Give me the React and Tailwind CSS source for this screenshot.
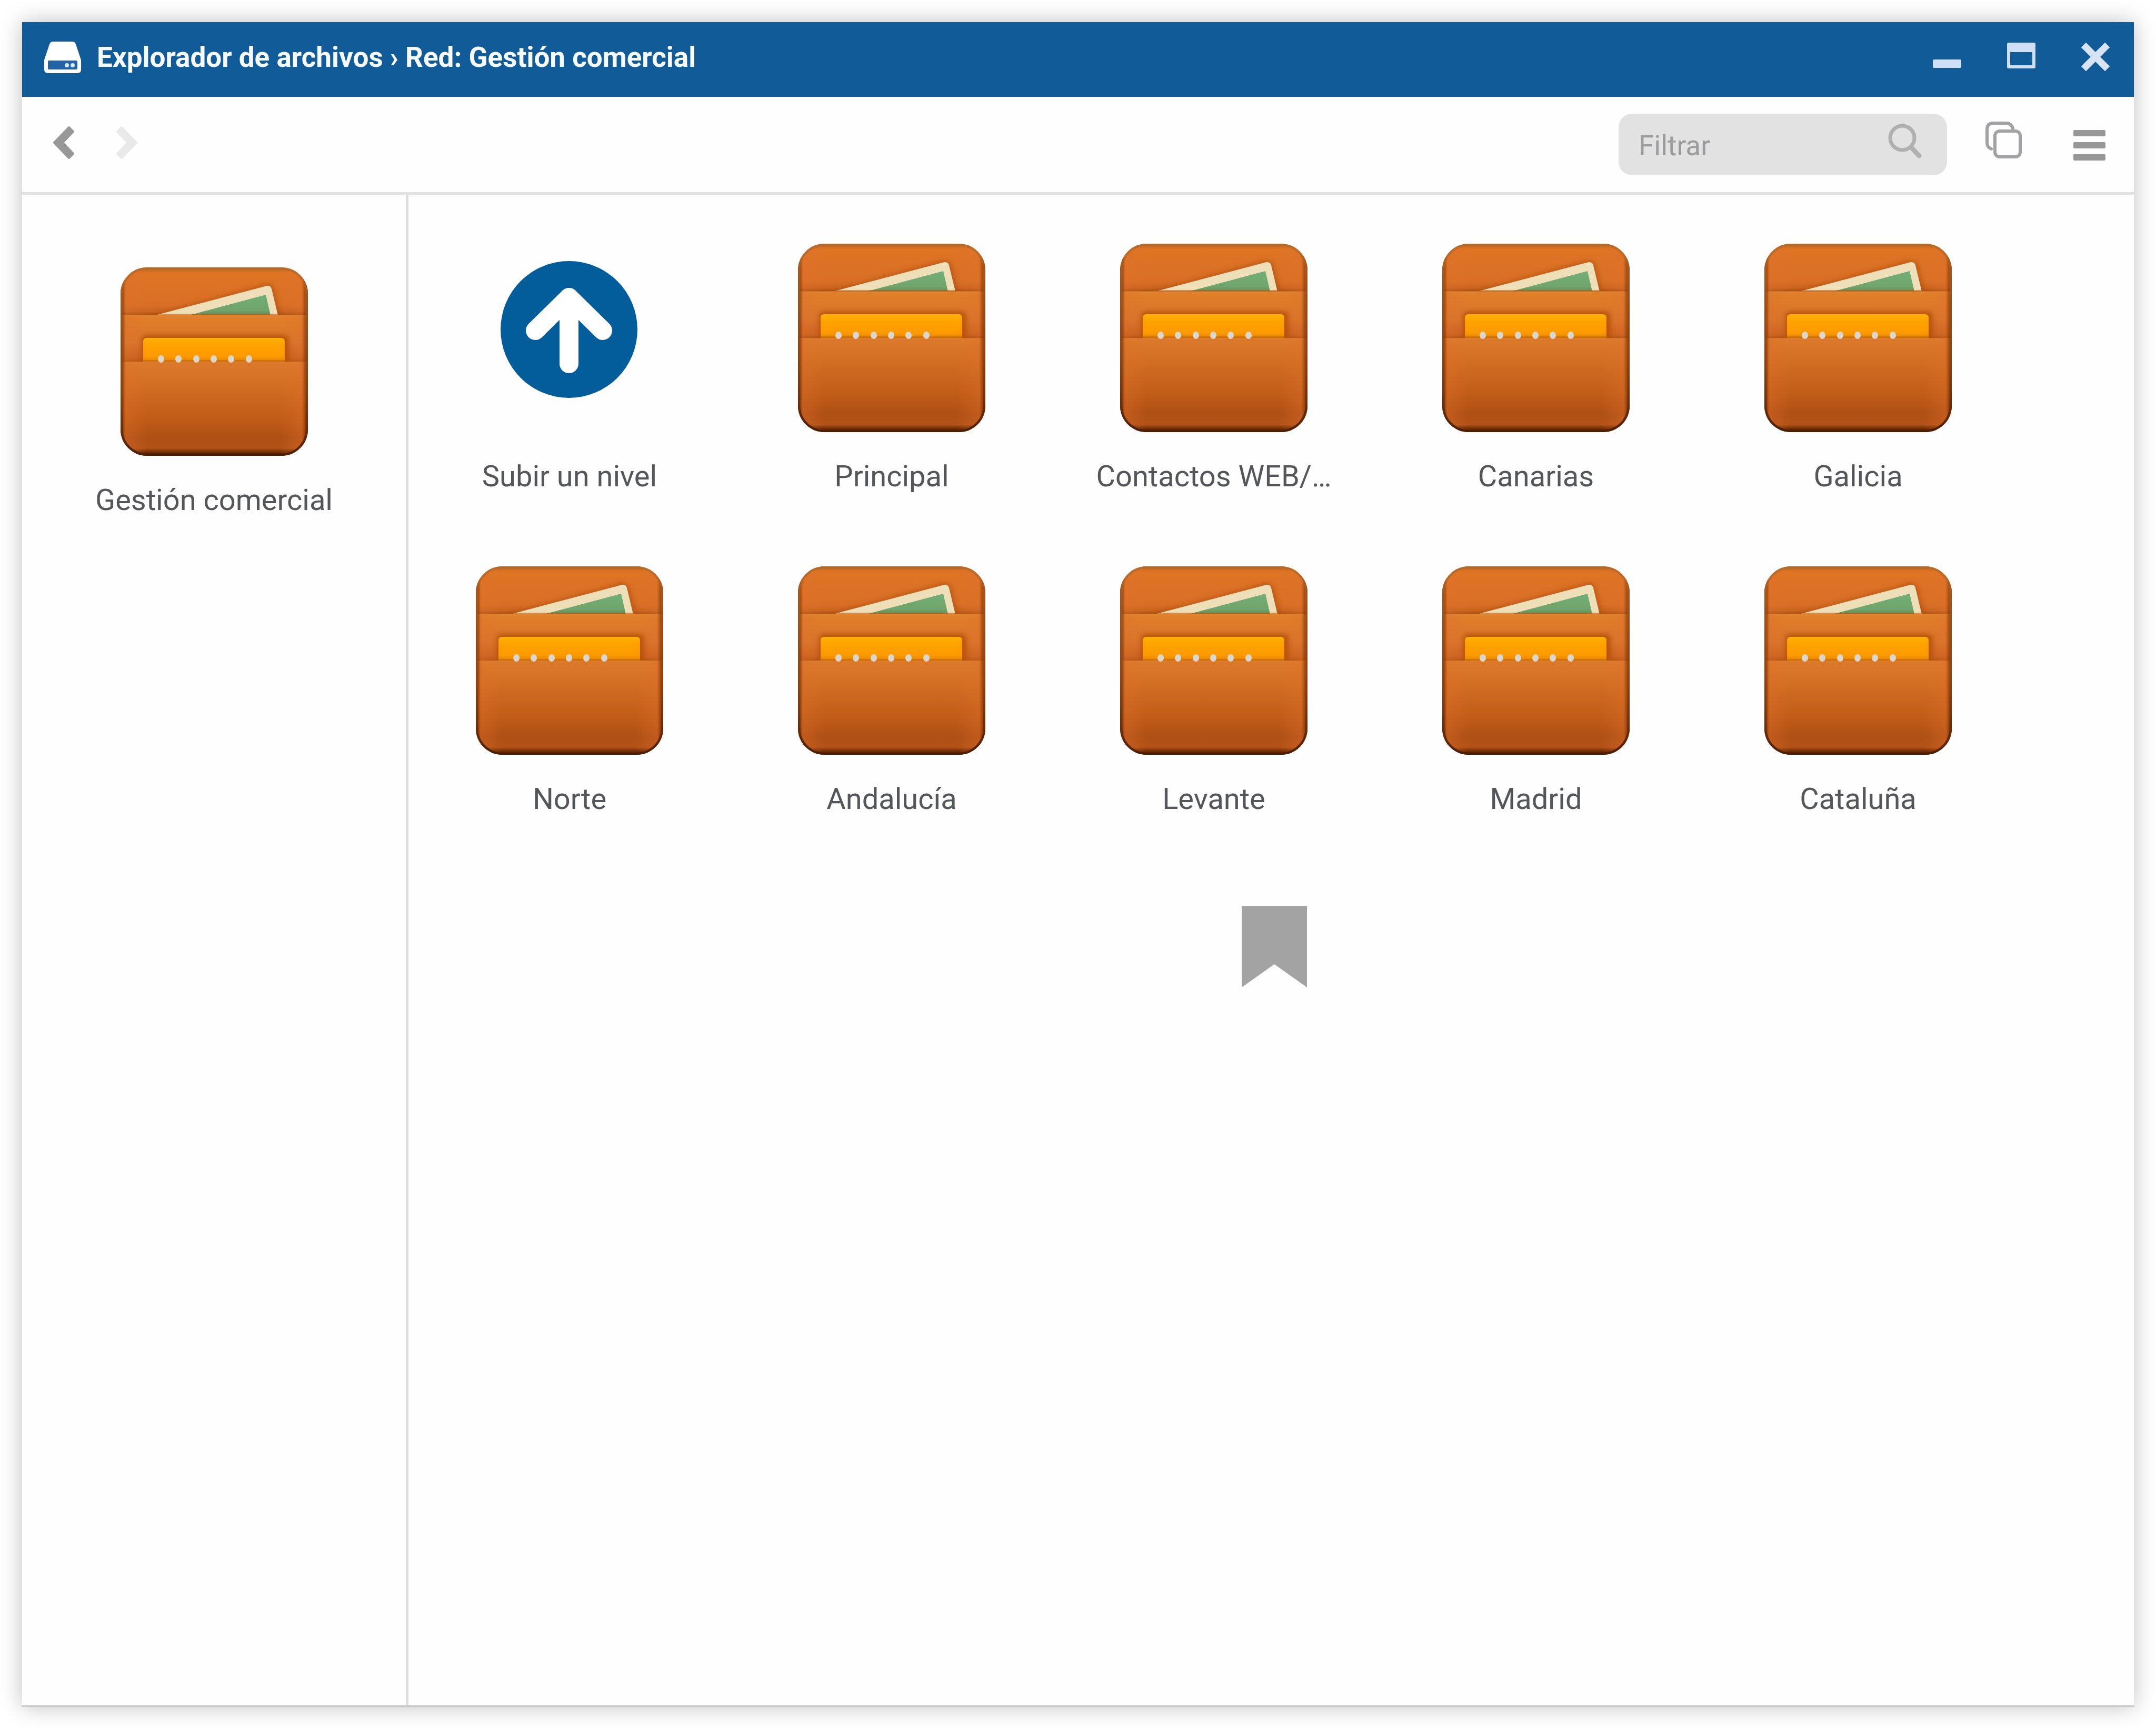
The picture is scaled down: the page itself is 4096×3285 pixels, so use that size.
import React, { useState } from 'react';

const folders = [
  'Principal',
  'Contactos WEB/…',
  'Canarias',
  'Galicia',
  'Norte',
  'Andalucía',
  'Levante',
  'Madrid',
  'Cataluña',
];

const WalletDefs = () => (
  <svg className="absolute h-0 w-0" aria-hidden="true">
    <defs>
      <clipPath id="walletShape">
        <rect width="356" height="358" rx="50" />
      </clipPath>
      <linearGradient id="back" x1="0" y1="0" x2="0" y2="1">
        <stop offset="0" stopColor="#b9651f" />
        <stop offset="0.12" stopColor="#df7424" />
        <stop offset="0.8" stopColor="#d96f26" />
        <stop offset="0.94" stopColor="#c9641f" />
        <stop offset="1" stopColor="#a94f14" />
      </linearGradient>
      <linearGradient id="middle" x1="0" y1="0" x2="0" y2="1">
        <stop offset="0" stopColor="#e08432" />
        <stop offset="0.1" stopColor="#df7d29" />
        <stop offset="0.6" stopColor="#d8742b" />
        <stop offset="0.92" stopColor="#c8601f" />
        <stop offset="1" stopColor="#a94d10" />
      </linearGradient>
      <linearGradient id="front" x1="0" y1="0" x2="0" y2="1">
        <stop offset="0" stopColor="#dc7a2c" />
        <stop offset="0.25" stopColor="#d26e22" />
        <stop offset="0.6" stopColor="#c15c19" />
        <stop offset="0.8" stopColor="#b05015" />
        <stop offset="0.92" stopColor="#b35217" />
        <stop offset="0.945" stopColor="#8a3c0b" />
        <stop offset="0.97" stopColor="#662805" />
        <stop offset="1" stopColor="#6b341a" />
      </linearGradient>
      <linearGradient id="card" x1="0" y1="0" x2="0" y2="1">
        <stop offset="0" stopColor="#ffb208" />
        <stop offset="0.3" stopColor="#ffa200" />
        <stop offset="0.75" stopColor="#fd9b00" />
        <stop offset="1" stopColor="#e08100" />
      </linearGradient>
      <linearGradient id="note" x1="0" y1="0" x2="0" y2="1">
        <stop offset="0" stopColor="#72ae78" />
        <stop offset="0.75" stopColor="#70a56c" />
        <stop offset="1" stopColor="#668c58" />
      </linearGradient>
      <linearGradient id="side" x1="0" y1="0" x2="1" y2="0">
        <stop offset="0" stopColor="#8f3d08" stopOpacity="0.9" />
        <stop offset="0.016" stopColor="#8f3d08" stopOpacity="0.6" />
        <stop offset="0.028" stopColor="#e0702c" stopOpacity="0.35" />
        <stop offset="0.14" stopColor="#e0702c" stopOpacity="0" />
        <stop offset="0.85" stopColor="#e0702c" stopOpacity="0" />
        <stop offset="0.965" stopColor="#e0702c" stopOpacity="0.35" />
        <stop offset="0.982" stopColor="#8f3d08" stopOpacity="0.6" />
        <stop offset="1" stopColor="#6f3415" stopOpacity="0.9" />
      </linearGradient>
      <linearGradient id="edge" x1="0" y1="0" x2="0" y2="1">
        <stop offset="0" stopColor="#b06a2c" stopOpacity="0.7" />
        <stop offset="0.6" stopColor="#8a4212" stopOpacity="0.6" />
        <stop offset="1" stopColor="#4e1e04" />
      </linearGradient>
      <filter id="soft" x="-20%" y="-20%" width="140%" height="140%">
        <feGaussianBlur stdDeviation="5" />
      </filter>
    </defs>
  </svg>
);

const WalletIcon = () => (
  <svg viewBox="0 0 356 358" className="h-[358px] w-[356px]" aria-hidden="true">
    <g clipPath="url(#walletShape)">
      <rect width="356" height="90" fill="url(#back)" />
      <path d="M60 91 276 32 290 36 304 91Z" fill="#a8480c" opacity="0.6" filter="url(#soft)" />
      <path d="M66 91 278 35Q285 34 287 41L299 91Z" fill="#eedfb8" />
      <path d="M130 91 276 52 285 91Z" fill="url(#note)" />
      <rect y="90" width="356" height="90" fill="url(#middle)" />
      <rect y="88" width="356" height="3" fill="#b2560f" opacity="0.55" />
      <rect x="40" y="129" width="280" height="60" rx="8" fill="#b04c04" opacity="0.85" filter="url(#soft)" />
      <path d="M43 180V141Q43 134 50 134H305Q312 134 312 141V180Z" fill="url(#card)" />
      <rect y="179" width="356" height="179" fill="url(#front)" />
      <rect y="176" width="356" height="3" fill="#b2560f" opacity="0.4" />
      {[77, 110, 144, 177, 210, 244].map(x => (
        <ellipse key={x} cx={x} cy="174" rx="6" ry="7" fill="#dcd6cb" />
      ))}
      <rect width="356" height="358" fill="url(#side)" />
      <rect x="2" y="2" width="352" height="354" rx="48" fill="none" stroke="url(#edge)" strokeWidth="5" />
    </g>
  </svg>
);

const UpIcon = () => (
  <svg viewBox="0 0 356 358" className="h-[358px] w-[356px]" aria-hidden="true">
    <circle cx="177" cy="163" r="130" fill="#045d9b" />
    <path d="M177 102V228M113 165 177 102 241 165" fill="none" stroke="#fff" strokeWidth="36" strokeLinecap="round" strokeLinejoin="round" />
  </svg>
);

const Tile = ({ icon, label }) => (
  <button type="button" className="flex w-[612px] flex-col items-center gap-[50px]">
    {icon}
    <span className="max-w-full truncate text-[56px] leading-[68px] text-[#55565a]">{label}</span>
  </button>
);

const App = () => {
  const [filter, setFilter] = useState('');

  const visible = folders.filter(f => f.toLowerCase().includes(filter.toLowerCase()));

  return (
    <div className="flex min-h-screen bg-white p-[42px] font-['Roboto',sans-serif]">
      <WalletDefs />
      <div className="flex flex-1 flex-col border-b-[3px] border-[#cccccc] bg-[#fefefe] shadow-[0_0_40px_rgba(0,0,0,0.25)]">
        <header className="flex h-[142px] items-center justify-between bg-[#115b99] pr-[46px] pb-2 pl-[42px]">
          <div className="flex items-center gap-[30px]">
            <svg viewBox="0 0 70 60" className="h-[60px] w-[70px]" aria-hidden="true">
              <path d="M17 0H53Q58 0 60 5L70 35V53Q70 60 63 60H7Q0 60 0 53V35L10 5Q12 0 17 0Z" fill="#fff" />
              <rect x="7" y="36" width="56" height="17" rx="2" fill="#2263a6" />
              <circle cx="43" cy="45" r="4" fill="#d9e8f8" />
              <circle cx="54" cy="45" r="4" fill="#d9e8f8" />
            </svg>
            <h1 className="text-[53px] leading-[68px] font-bold whitespace-nowrap text-[#f6faff]">
              Explorador de archivos › Red: Gestión comercial
            </h1>
          </div>
          <div className="flex items-center gap-[87px]">
            <button type="button" aria-label="Minimizar">
              <svg viewBox="0 0 54 60" className="h-[60px] w-[54px]">
                <rect y="34" width="54" height="16" rx="2" fill="#cfdff5" />
              </svg>
            </button>
            <button type="button" aria-label="Maximizar">
              <svg viewBox="0 0 54 60" className="h-[60px] w-[54px]">
                <path fillRule="evenodd" d="M3 2H51Q54 2 54 5V48Q54 51 51 51H3Q0 51 0 48V5Q0 2 3 2ZM6 20V45H48V20Z" fill="#cfdff5" />
              </svg>
            </button>
            <button type="button" aria-label="Cerrar">
              <svg viewBox="0 0 54 60" className="h-[60px] w-[54px]">
                <path d="M9 11 45 47M45 11 9 47" fill="none" stroke="#d6e4f5" strokeWidth="13" strokeLinecap="square" strokeLinejoin="round" />
              </svg>
            </button>
          </div>
        </header>

        <nav className="flex h-[186px] items-center justify-between border-b-[5px] border-[#e2e2e4] pr-[54px] pl-[58px]">
          <div className="flex items-center gap-[78px]">
            <button type="button" aria-label="Atrás">
              <svg viewBox="0 0 42 72" className="h-[72px] w-[42px]">
                <path d="M31 3 39 11 19 32 39 53 31 61 3 32Z" fill="#989898" stroke="#989898" strokeWidth="4" strokeLinejoin="round" />
              </svg>
            </button>
            <button type="button" aria-label="Adelante">
              <svg viewBox="0 0 42 72" className="h-[72px] w-[42px]">
                <path d="M11 3 3 11 23 32 3 53 11 61 39 32Z" fill="#e9e9e9" stroke="#e9e9e9" strokeWidth="4" strokeLinejoin="round" />
              </svg>
            </button>
          </div>
          <div className="flex items-center">
            <label className="flex h-[117px] w-[624px] items-center rounded-[26px] bg-[#e2e2e2] pr-12 pl-[38px]">
              <input
                type="text"
                aria-label="Filtrar"
                placeholder="Filtrar"
                value={filter}
                onChange={e => setFilter(e.target.value)}
                className="min-w-0 flex-1 bg-transparent pt-1 text-[53px] leading-[68px] text-[#555] outline-none placeholder:text-[#9c9c9e]"
              />
              <svg viewBox="0 0 64 82" className="h-[82px] w-[64px]" aria-hidden="true">
                <circle cx="27" cy="28" r="23" fill="none" stroke="#b0b0b0" strokeWidth="7" />
                <path d="M44 46 59 62" stroke="#b0b0b0" strokeWidth="9" strokeLinecap="round" />
              </svg>
            </label>
            <button type="button" aria-label="Copiar" className="ml-[73px]">
              <svg viewBox="0 0 69 87" className="h-[87px] w-[69px]" fill="none" stroke="#a2a2a4" strokeWidth="6">
                <path d="M11 52Q3 49 3 40V15Q3 3 15 3H39Q49 3 52 13" strokeLinecap="round" />
                <rect x="18" y="18" width="48" height="49" rx="9" />
              </svg>
            </button>
            <button type="button" aria-label="Menú" className="ml-[98px]">
              <svg viewBox="0 0 61 60" className="h-[60px] w-[61px]" fill="#979797">
                <rect y="2" width="61" height="12" rx="2" />
                <rect y="25" width="61" height="12" rx="2" />
                <rect y="48" width="61" height="12" rx="2" />
              </svg>
            </button>
          </div>
        </nav>

        <div className="flex flex-1">
          <aside className="flex w-[734px] flex-col items-center border-r-[5px] border-[#dededf] pt-[138px]">
            <Tile icon={<WalletIcon />} label="Gestión comercial" />
          </aside>
          <main className="flex-1 pt-[93px]">
            <div className="flex flex-wrap gap-y-[137px]">
              <Tile icon={<UpIcon />} label="Subir un nivel" />
              {visible.map(name => (
                <Tile key={name} icon={<WalletIcon />} label={name} />
              ))}
            </div>
            <div className="mt-[169px] flex justify-center pl-3">
              <svg viewBox="0 0 126 155" className="h-[155px] w-[126px]" aria-hidden="true">
                <path d="M1 0H125V155L63 111 1 155Z" fill="#a3a3a3" />
              </svg>
            </div>
          </main>
        </div>
      </div>
    </div>
  );
};

export default App;
